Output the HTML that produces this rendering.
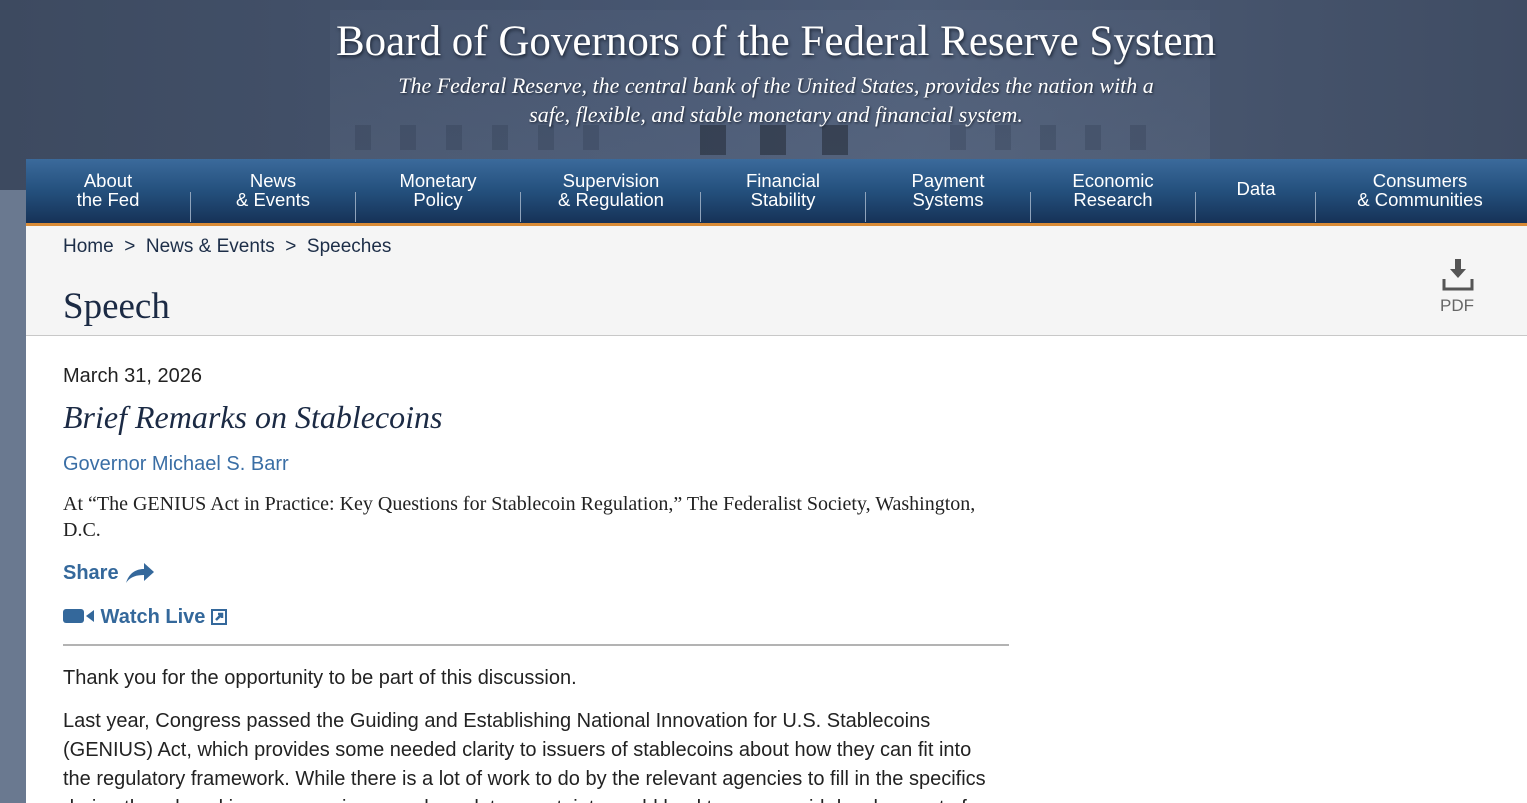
<!DOCTYPE html>
<html><head><meta charset="utf-8"><style>
*{margin:0;padding:0;box-sizing:border-box}
html,body{width:1527px;height:803px;overflow:hidden}
body{background:#6a7990;font-family:"Liberation Sans",sans-serif;position:relative}
.top{position:absolute;left:0;top:0;width:1527px;height:190px;background:linear-gradient(90deg,#3d4a60 0%,#475671 45%,#4d5c76 60%,#3f4c63 100%)}
.bldg{position:absolute;left:330px;top:10px;width:880px;height:150px;background:linear-gradient(180deg,rgba(120,135,160,.08),rgba(120,135,160,.18))}
.win{position:absolute;top:125px;width:16px;height:25px;background:rgba(40,50,70,.25)}
h1{position:absolute;top:17px;left:0;width:1552px;text-align:center;font-family:"Liberation Serif",serif;font-weight:normal;color:#fff;font-size:43px;text-shadow:1px 2px 3px #1c2535}
.tag{position:absolute;top:71px;left:0;width:1552px;text-align:center;font-family:"Liberation Serif",serif;font-style:italic;color:#fff;font-size:22px;line-height:29px;text-shadow:1px 1px 2px #1c2535}
.page{position:absolute;left:26px;top:159px;width:1501px;height:644px;background:#fff;overflow:hidden}
nav{height:67px;background:linear-gradient(180deg,#3b6a9b 0%,#24507d 50%,#163257 100%);border-bottom:3px solid #d98b36;position:relative}
nav div{position:absolute;top:12px;color:#fff;font-size:18.5px;line-height:19px;text-align:center}
nav i{position:absolute;top:33px;width:1px;height:30px;background:#8fa3bb}
.crumb{height:110px;background:#f5f5f5;border-bottom:1px solid #c8c8c8;position:relative}
.crumb .bc{position:absolute;left:37px;top:10px;font-size:19px;color:#1d2e48}
.crumb h2{position:absolute;left:37px;top:59px;font-family:"Liberation Serif",serif;font-weight:normal;font-size:37px;color:#1b2a44}
.pdf{position:absolute;left:1414px;top:70px;color:#666;font-size:17px}
.c{position:absolute;left:37px;color:#222}
</style></head><body>
<div class="top">
<div class="bldg"></div>
<div class="win" style="left:355px"></div><div class="win" style="left:400px"></div><div class="win" style="left:446px"></div><div class="win" style="left:492px"></div><div class="win" style="left:538px"></div><div class="win" style="left:583px"></div><div class="win" style="left:700px;width:26px;height:30px;background:rgba(30,35,45,.5)"></div><div class="win" style="left:760px;width:26px;height:30px;background:rgba(30,35,45,.5)"></div><div class="win" style="left:822px;width:26px;height:30px;background:rgba(30,35,45,.5)"></div><div class="win" style="left:950px"></div><div class="win" style="left:995px"></div><div class="win" style="left:1040px"></div><div class="win" style="left:1085px"></div><div class="win" style="left:1130px"></div>
<h1>Board of Governors of the Federal Reserve System</h1>
<div class="tag">The Federal Reserve, the central bank of the United States, provides the nation with a<br>safe, flexible, and stable monetary and financial system.</div>
</div>
<div class="page">
<nav>
<div style="left:32px;width:100px">About<br>the Fed</div><i style="left:164px"></i>
<div style="left:197px;width:100px">News<br>&amp; Events</div><i style="left:329px"></i>
<div style="left:362px;width:100px">Monetary<br>Policy</div><i style="left:494px"></i>
<div style="left:510px;width:150px">Supervision<br>&amp; Regulation</div><i style="left:674px"></i>
<div style="left:702px;width:110px">Financial<br>Stability</div><i style="left:839px"></i>
<div style="left:867px;width:110px">Payment<br>Systems</div><i style="left:1004px"></i>
<div style="left:1032px;width:110px">Economic<br>Research</div><i style="left:1169px"></i>
<div style="left:1190px;width:80px;top:20px">Data</div><i style="left:1289px"></i>
<div style="left:1309px;width:170px">Consumers<br>&amp; Communities</div>
</nav>
<div class="crumb">
<div class="bc">Home &nbsp;&gt;&nbsp; News &amp; Events &nbsp;&gt;&nbsp; Speeches</div>
<h2>Speech</h2>
<svg style="position:absolute;left:1415px;top:33px" width="34" height="34" viewBox="0 0 34 34"><path d="M14 0h6v10h5l-8 9-8-9h5z" fill="#555"/><path d="M3 20v10h28V20" fill="none" stroke="#555" stroke-width="3"/></svg>
<div class="pdf">PDF</div>
</div>
<div class="c" style="top:206px;font-size:20px">March 31, 2026</div>
<div class="c" style="top:240px;font-family:'Liberation Serif',serif;font-style:italic;font-size:32px;color:#1b2a44">Brief Remarks on Stablecoins</div>
<div class="c" style="top:294px;font-size:20px;color:#3a6ea5">Governor Michael S. Barr</div>
<div class="c" style="top:332px;font-family:'Liberation Serif',serif;font-size:20px;line-height:26px;width:940px">At “The GENIUS Act in Practice: Key Questions for Stablecoin Regulation,” The Federalist Society, Washington, D.C.</div>
<div class="c" style="top:402px;font-size:20px;font-weight:bold;color:#34689b">Share <svg width="32" height="22" viewBox="0 0 32 22" style="vertical-align:-4px"><path d="M2 22C5 12 12 8 20 8V2l10 9-10 9v-6C12 14 6 16 2 22z" fill="#34689b"/></svg></div>
<div class="c" style="top:447px;font-size:20px;font-weight:bold;color:#34689b"><svg width="32" height="16" viewBox="0 0 32 16" style="vertical-align:-1px"><rect x="0" y="1" width="21" height="14" rx="3" fill="#34689b"/><path d="M23 8l8-6v12z" fill="#34689b"/></svg> Watch Live <svg width="16" height="16" viewBox="0 0 16 16" style="vertical-align:-2px"><rect x="1" y="1" width="14" height="14" fill="none" stroke="#34689b" stroke-width="2"/><path d="M5 11l6-6M7 5h4v4" stroke="#34689b" stroke-width="2.5" fill="none"/></svg></div>
<div style="position:absolute;left:37px;top:485px;width:946px;height:2px;background:#b3b3b3"></div>
<div class="c" style="top:508px;font-size:20px">Thank you for the opportunity to be part of this discussion.</div>
<div class="c" style="top:548px;font-size:20px;line-height:29px;width:940px">Last year, Congress passed the Guiding and Establishing National Innovation for U.S. Stablecoins (GENIUS) Act, which provides some needed clarity to issuers of stablecoins about how they can fit into the regulatory framework. While there is a lot of work to do by the relevant agencies to fill in the specifics during the rulemaking process, increased regulatory certainty could lead to more rapid development of</div>
</div>
</body></html>
